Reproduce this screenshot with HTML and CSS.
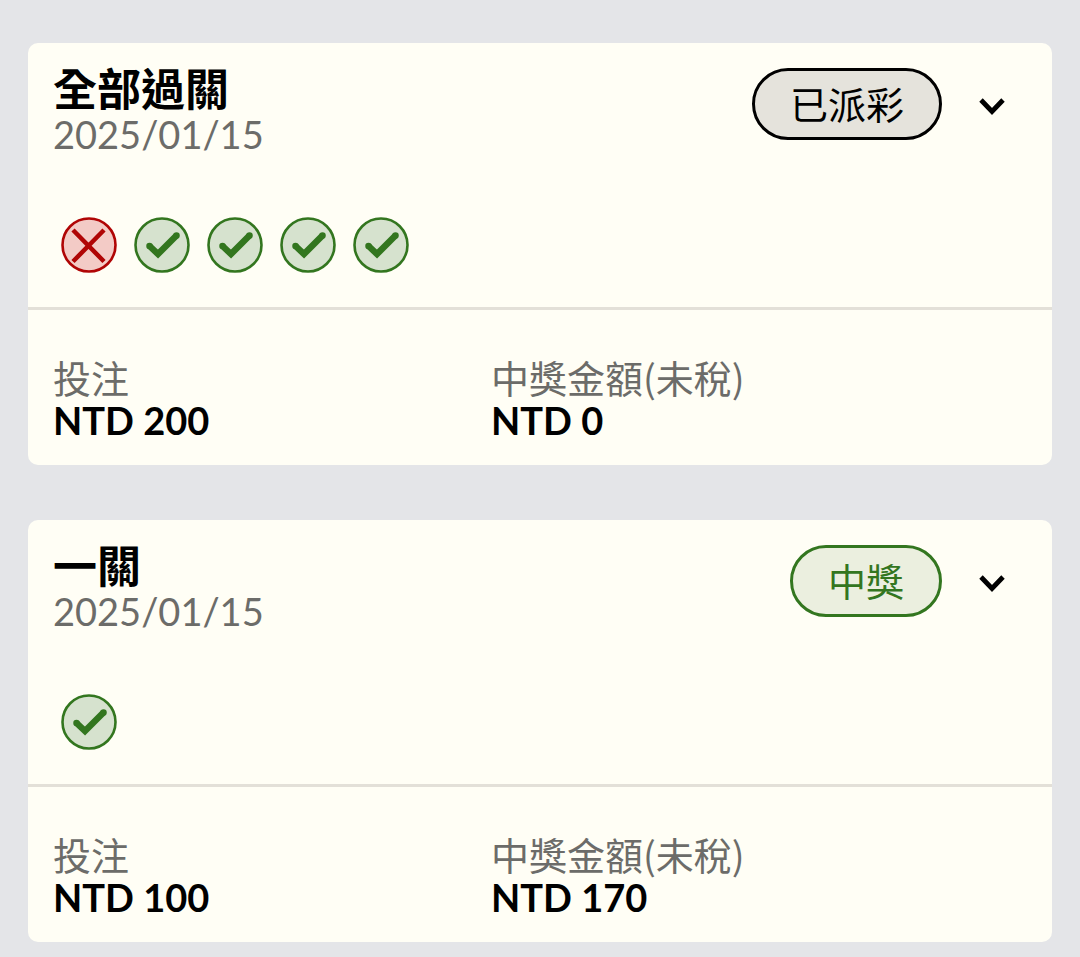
FILE: index.html
```html
<!DOCTYPE html>
<html lang="zh-Hant">
<head>
<meta charset="utf-8">
<meta name="viewport" content="width=device-width, initial-scale=1">
<title>投注紀錄</title>
<link rel="stylesheet" href="styles.css">
</head>
<body>
<svg class="defs" aria-hidden="true">
  <symbol id="win" viewBox="0 0 56 56"><circle cx="28" cy="28" r="26.5" fill="#d6e2ce" stroke="#33761f" stroke-width="2.6"/><path d="M15.500 29 24 37 42.500 18.500" fill="none" stroke="#33761f" stroke-width="6.500"/><circle cx="15.500" cy="29" r="3.250" fill="#33761f"/><circle cx="42.500" cy="18.500" r="3.250" fill="#33761f"/></symbol>
  <symbol id="lose" viewBox="0 0 56 56"><circle cx="28" cy="28" r="26.500" fill="#f3cbc6" stroke="#b00505" stroke-width="2.600"/><path d="M12 13 43 44.500M43 13 12 44.500" fill="none" stroke="#b00505" stroke-width="4.500"/></symbol>
  <symbol id="chevron" viewBox="0 0 28 20"><path d="M3 4 14 15.500 25 4" fill="none" stroke="#000" stroke-width="4.800"/></symbol>
</svg>
<main class="list">
  <article class="card">
    <section class="summary">
      <header class="head">
        <div class="heading"><h2 class="title">全部過關</h2><time class="date" datetime="2025-01-15">2025/01/15</time></div>
        <span class="status">已派彩</span>
        <button class="toggle" type="button" aria-label="展開"><svg class="arrow"><use href="#chevron"/></svg></button>
      </header>
      <div class="results">
        <svg class="mark"><use href="#lose"/></svg><svg class="mark"><use href="#win"/></svg><svg class="mark"><use href="#win"/></svg><svg class="mark"><use href="#win"/></svg><svg class="mark"><use href="#win"/></svg>
      </div>
    </section>
    <dl class="amounts">
      <div><dt class="label">投注</dt><dd class="value">NTD 200</dd></div>
      <div><dt class="label">中獎金額(未稅)</dt><dd class="value">NTD 0</dd></div>
    </dl>
  </article>
  <article class="card">
    <section class="summary">
      <header class="head">
        <div class="heading"><h2 class="title">一關</h2><time class="date" datetime="2025-01-15">2025/01/15</time></div>
        <span class="status status-won">中獎</span>
        <button class="toggle" type="button" aria-label="展開"><svg class="arrow"><use href="#chevron"/></svg></button>
      </header>
      <div class="results"><svg class="mark"><use href="#win"/></svg></div>
    </section>
    <dl class="amounts">
      <div><dt class="label">投注</dt><dd class="value">NTD 100</dd></div>
      <div><dt class="label">中獎金額(未稅)</dt><dd class="value">NTD 170</dd></div>
    </dl>
  </article>
</main>
</body>
</html>
```
FILE: styles.css
```css
* { box-sizing: border-box; }
body { margin: 0; background: #e4e5e8; color: #000; font-family: Lato, "Noto Sans CJK TC", sans-serif; }
.defs { position: absolute; width: 0; height: 0; }
.list { display: grid; gap: 55px; padding: 43px 28px 15px; }
.card { background: #fffef5; border-radius: 10px; overflow: hidden; }
.summary { padding: 25px 25px 34px; border-bottom: 3px solid #e3e0d8; }
.head { display: flex; align-items: flex-start; }
.heading { flex: 1; }
.title { margin: 0; font-size: 44px; line-height: 42px; font-weight: 700; }
.date { display: block; color: #6c6c69; font-size: 38px; line-height: 48px; }
.status { padding: 0 35px; border: 3px solid #000; border-radius: 36px; background: #e5e3dc; font-size: 38px; line-height: 66px; }
.status-won { border-color: #33761f; background: #ebefdf; color: #33761f; }
.toggle { display: flex; align-items: center; justify-content: center; width: 60px; height: 76px; margin: 0 5px 0 20px; padding: 0; border: 0; background: none; }
.arrow { width: 28px; height: 20px; }
.results { display: flex; gap: 17px; padding: 59px 8px 0; }
.mark { width: 56px; height: 56px; }
.amounts { display: grid; grid-template-columns: 438fr 536fr; margin: 0; padding: 48px 25px 21px; }
.label { color: #6c6c69; font-family: "Noto Sans CJK TC", sans-serif; font-size: 38px; line-height: 38px; }
.value { margin: 0; font-size: 38px; line-height: 48px; font-weight: 700; }
```
